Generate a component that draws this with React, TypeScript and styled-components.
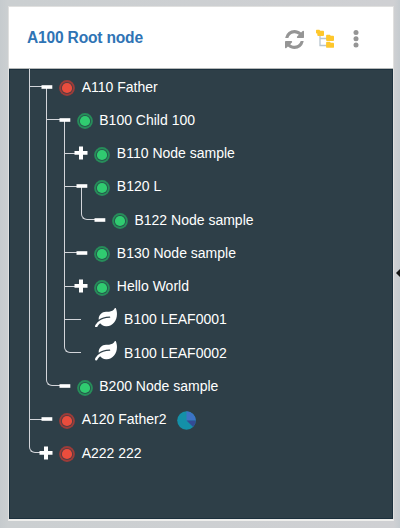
import React from "react";
import styled, { createGlobalStyle } from "styled-components";
import { FaLeaf } from "react-icons/fa";

const LINE = "#d3d5da";
const STEP = 17.6;
const ROW = 33.27;

const GlobalStyle = createGlobalStyle`
  * { box-sizing: border-box; }
  body { margin: 0; background: #c9cdd0; font-family: "Liberation Sans", Arial, sans-serif; }
`;

const Page = styled.main`
  position: relative;
  width: 400px;
  height: 528px;
  padding: 6px 6px 7px 8px;
  overflow: hidden;
  background: linear-gradient(90deg, #c6cbce, #cbcfd1 8px, #cfd0d3 394px, #c5cbcf);
`;

const Panel = styled.section`
  display: flex;
  flex-direction: column;
  height: 100%;
  border: 1px solid #e0e0df;
  border-bottom: 2px solid #eeeeec;
  background: #2e3f48;
`;

const Header = styled.header`
  display: flex;
  align-items: center;
  flex: 0 0 62px;
  padding: 0 27px 0 18px;
  border-bottom: 1px solid #b5b8b8;
  background: #fff;
`;

const Title = styled.h1`
  flex: 1;
  margin: 0;
  font-size: 15.6px;
  letter-spacing: -0.2px;
  line-height: 20px;
  font-weight: 700;
  color: #2f74b5;
`;

const Actions = styled.div`
  display: flex;
  align-items: center;
  gap: 11px;
  padding-top: 3px;
  color: #959595;
  svg { display: block; }
`;

const TreeArea = styled.div`
  flex: 1;
  padding-left: 19.7px;
  box-shadow: inset 0 0 0 1px #1c303d;
`;

const Branches = styled.ul`
  margin: 0;
  padding: 0;
  list-style: none;
`;

const Item = styled.li`
  display: flex;
`;

const Rail = styled.div`
  display: flex;
  flex-direction: column;
  flex: 0 0 ${STEP}px;
`;

const Elbow = styled.div<{ $joined: boolean; $last: boolean }>`
  flex: 0 0 ${(p) => (p.$joined ? 34 : 18)}px;
  margin-top: ${(p) => (p.$joined ? -16 : 0)}px;
  border-left: 1px solid ${LINE};
  border-bottom: 1px solid ${LINE};
  border-bottom-left-radius: ${(p) => (p.$last ? 6 : 0)}px;
`;

const Trunk = styled.div`
  flex: 1;
  border-left: 1px solid ${LINE};
`;

const Row = styled.div`
  display: flex;
  align-items: center;
  height: ${ROW}px;
  white-space: nowrap;
`;

const Toggle = styled.svg`
  display: block;
  position: relative;
  flex: none;
  width: 14px;
  height: 14px;
  margin: 2px 6px 0 -7px;
  fill: #fff;
`;

const Status = styled.svg`
  flex: none;
  width: 16px;
  height: 16px;
  margin: 5px 6.4px 0 0;
`;

const LeafIcon = styled(FaLeaf)`
  flex: none;
  width: 22px;
  height: 19.5px;
  margin: -2px 6.6px 0 14px;
  color: #fff;
`;

const Label = styled.span`
  padding-top: 2px;
  font-size: 14px;
  line-height: 18px;
  color: #fff;
`;

const Pie = styled.svg`
  width: 19px;
  height: 19px;
  margin: 4px 0 0 10px;
`;

const SideArrow = styled.i`
  position: absolute;
  top: 269px;
  right: 0;
  border: 4px solid transparent;
  border-left-width: 0;
  border-right-color: #151515;
`;

type NodeData = {
  label: string;
  kind: "red" | "green" | "leaf";
  collapsed?: boolean;
  pie?: boolean;
  children?: NodeData[];
};

const nodes: NodeData[] = [
  {
    label: "A110 Father",
    kind: "red",
    children: [
      {
        label: "B100 Child 100",
        kind: "green",
        children: [
          { label: "B110 Node sample", kind: "green", collapsed: true },
          {
            label: "B120 L",
            kind: "green",
            children: [{ label: "B122 Node sample", kind: "green" }],
          },
          { label: "B130 Node sample", kind: "green" },
          { label: "Hello World", kind: "green", collapsed: true },
          { label: "B100 LEAF0001", kind: "leaf" },
          { label: "B100 LEAF0002", kind: "leaf" },
        ],
      },
      { label: "B200 Node sample", kind: "green" },
    ],
  },
  { label: "A120 Father2", kind: "red", pie: true },
  { label: "A222 222", kind: "red", collapsed: true },
];

function Marker({ node }: { node: NodeData }) {
  if (node.kind === "leaf") return <LeafIcon />;
  const red = node.kind === "red";
  return (
    <>
      <Toggle viewBox="0 0 14 14">
        {node.collapsed ? (
          <path d="M5 .5h4v4.600h4.500v3.700H9v4.600H5V8.800H.5V5.100H5z" />
        ) : (
          <path d="M2.500 5.200h10.800v3.600H2.500z" />
        )}
      </Toggle>
      <Status viewBox="0 0 16 16">
        <circle cx="8" cy="8" r="7.900" fill={red ? "#9c3c39" : "#278d5a"} />
        <circle cx="8" cy="8" r="6.100" fill={red ? "#573d42" : "#28584d"} />
        <circle cx="8" cy="8" r="5.100" fill={red ? "#ea4d3d" : "#30cb70"} />
      </Status>
    </>
  );
}

function Tree({ items, nested = false }: { items: NodeData[]; nested?: boolean }) {
  return (
    <Branches>
      {items.map((node, i) => {
        const last = i === items.length - 1;
        return (
          <Item key={node.label}>
            <Rail>
              <Elbow $joined={nested && i === 0} $last={last} />
              {!last && <Trunk />}
            </Rail>
            <div>
              <Row>
                <Marker node={node} />
                <Label>{node.label}</Label>
                {node.pie && (
                  <Pie viewBox="0 0 20 20">
                    <circle cx="10" cy="10" r="9.800" fill="#1490a8" />
                    <path d="M10 10V.2A9.800 9.800 0 0 1 19.800 10z" fill="#3d73c5" />
                    <path d="M10 10h9.800a9.800 9.800 0 0 1-2.900 6.900z" fill="#344b94" />
                  </Pie>
                )}
              </Row>
              {node.children && <Tree items={node.children} nested />}
            </div>
          </Item>
        );
      })}
    </Branches>
  );
}

export default function App() {
  return (
    <>
      <GlobalStyle />
      <Page>
        <Panel>
          <Header>
            <Title>A100 Root node</Title>
            <Actions>
              <svg width="19" height="19" viewBox="0 128 1536 1536" fill="currentColor">
                <path d="M1511 1056q0 5-1 7-64 268-268 434.500t-478 166.500q-146 0-282.500-55t-243.500-157l-129 129q-19 19-45 19t-45-19-19-45v-448q0-26 19-45t45-19h448q26 0 45 19t19 45-19 45l-137 137q71 66 161 102t187 36q134 0 250-65t186-179q11-17 53-117 8-23 30-23h192q13 0 22.500 9.500t9.500 22.500zM1536 256v448q0 26-19 45t-45 19h-448q-26 0-45-19t-19-45 19-45l138-138q-148-137-349-137-134 0-250 65t-186 179q-11 17-53 117-8 23-30 23h-199q-13 0-22.500-9.500t-9.500-22.500v-7q65-268 270-434.500t480-166.500q146 0 284 55.500t245 156.500l130-129q19-19 45-19t45 19 19 45z" />
              </svg>
              <svg width="20" height="20" viewBox="0 0 20 20">
                <path d="M5 6v10.500h7M5 9.500h7" fill="none" stroke="#b8c5ce" strokeWidth="1.300" />
                <g fill="#fec72c">
                  <path d="M1.700.8h2.600l1 1h2.800q.9 0 .9.900v3.300q0 .9-.9.900H3.200q-.9 0-.9-.9V4.500H1.700q-.7 0-.7-.7V1.500q0-.7.7-.7z" />
                  <path d="M12 5.800h2.800l1 1h2.300q.9 0 .9.900v3.400q0 .9-.9.900H12q-.9 0-.9-.9V6.700q0-.9.900-.9z" />
                  <path d="M12 12.800h2.800l1 1h2.300q.9 0 .9.900v3.200q0 .9-.9.900H12q-.9 0-.9-.9v-4.200q0-.9.900-.9z" />
                </g>
              </svg>
              <svg width="20" height="20" viewBox="0 0 20 20" fill="currentColor">
                <circle cx="10" cy="3.500" r="2.500" />
                <circle cx="10" cy="9.700" r="2.500" />
                <circle cx="10" cy="15.900" r="2.500" />
              </svg>
            </Actions>
          </Header>
          <TreeArea>
            <Tree items={nodes} />
          </TreeArea>
        </Panel>
        <SideArrow />
      </Page>
    </>
  );
}
